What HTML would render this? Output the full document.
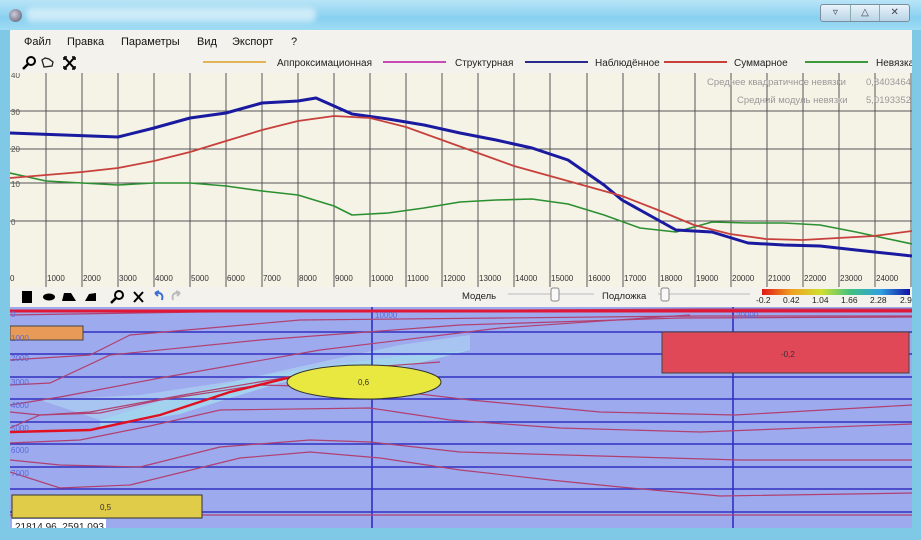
<!DOCTYPE html>
<html><head><meta charset="utf-8"><style>
*{margin:0;padding:0;box-sizing:border-box}
body{width:921px;height:540px;overflow:hidden;background:#7fc8e6;font-family:"Liberation Sans",sans-serif;position:relative}
.title{position:absolute;left:0;top:0;width:921px;height:30px;background:linear-gradient(180deg,#b8e4f6,#88d0f0 60%,#a0dcf4)}
.blur{position:absolute;left:26px;top:8px;width:290px;height:14px;background:rgba(255,255,255,.55);border-radius:6px;filter:blur(3px)}
.btns{position:absolute;left:820px;top:4px;width:90px;height:18px;border:1px solid #7a8ea0;border-radius:3px;background:linear-gradient(#e8f3fa,#b9d4e6);font-size:10px;color:#445;display:flex}
.btns span{flex:1;text-align:center;border-right:1px solid #8aa;line-height:16px}
.menu{position:absolute;left:10px;top:30px;width:902px;height:23px;background:#f3f2ec;font-size:11px;color:#111}
.menu span{position:absolute;top:6px}
.tb{position:absolute;left:10px;top:53px;width:902px;height:20px;background:#f3f2ec;font-size:10px;color:#222}
.chart{position:absolute;left:10px;top:73px;width:902px;height:214px;background:#f5f2e6}
.tb2{position:absolute;left:10px;top:287px;width:902px;height:20px;background:#f3f2ec;font-size:10px;color:#222}
</style></head><body>
<div class="title"><div style="position:absolute;left:9px;top:9px;width:13px;height:13px;border-radius:50%;background:radial-gradient(circle at 40% 40%,#ccd,#556)"></div><div class="blur"></div>
<div class="btns"><span>▿</span><span>△</span><span style="border:none">✕</span></div></div>
<div class="menu"><span style="left:14px">Файл</span><span style="left:57px">Правка</span><span style="left:111px">Параметры</span><span style="left:187px">Вид</span><span style="left:222px">Экспорт</span><span style="left:281px">?</span></div>
<div class="tb">
<svg width="902" height="20" style="position:absolute;left:0;top:0">
<circle cx="21" cy="8" r="4" fill="none" stroke="#000" stroke-width="2"/><line x1="18" y1="11" x2="13" y2="16" stroke="#000" stroke-width="2.5"/>
<path d="M34 14 L32 7 L35 5 L39 6 L43 9 L42 13 Z" fill="none" stroke="#222" stroke-width="1.3"/>
<path d="M55 5 L64 15 M64 5 L55 15" stroke="#000" stroke-width="2"/><path d="M54 4h3M54 4v3M65 4h-3M65 4v3M54 16h3M54 16v-3M65 16h-3M65 16v-3" stroke="#000" stroke-width="1.5"/>
<line x1="193" y1="9" x2="256" y2="9" stroke="#e3b457" stroke-width="2"/>
<text x="267" y="13" font-size="10" fill="#222" font-family="Liberation Sans">Аппроксимационная</text>
<line x1="373" y1="9" x2="436" y2="9" stroke="#c84ab5" stroke-width="2"/>
<text x="445" y="13" font-size="10" fill="#222" font-family="Liberation Sans">Структурная</text>
<line x1="515" y1="9" x2="578" y2="9" stroke="#2a2a8c" stroke-width="2"/>
<text x="585" y="13" font-size="10" fill="#222" font-family="Liberation Sans">Наблюдённое</text>
<line x1="654" y1="9" x2="717" y2="9" stroke="#c8403c" stroke-width="2"/>
<text x="724" y="13" font-size="10" fill="#222" font-family="Liberation Sans">Суммарное</text>
<line x1="795" y1="9" x2="858" y2="9" stroke="#3a9a3c" stroke-width="2"/>
<text x="866" y="13" font-size="10" fill="#222" font-family="Liberation Sans">Невязка</text>
</svg></div>
<div class="chart">
<svg width="902" height="214" style="position:absolute;left:0;top:0" font-family="Liberation Sans" font-size="8" fill="#555">
<g stroke="#555" stroke-width="1">
<line x1="36" y1="0" x2="36" y2="214"/><line x1="72" y1="0" x2="72" y2="214"/><line x1="108" y1="0" x2="108" y2="214"/><line x1="144" y1="0" x2="144" y2="214"/><line x1="180" y1="0" x2="180" y2="214"/><line x1="216" y1="0" x2="216" y2="214"/><line x1="252" y1="0" x2="252" y2="214"/><line x1="288" y1="0" x2="288" y2="214"/><line x1="324" y1="0" x2="324" y2="214"/><line x1="360" y1="0" x2="360" y2="214"/><line x1="396" y1="0" x2="396" y2="214"/><line x1="432" y1="0" x2="432" y2="214"/><line x1="468" y1="0" x2="468" y2="214"/><line x1="504" y1="0" x2="504" y2="214"/><line x1="540" y1="0" x2="540" y2="214"/><line x1="577" y1="0" x2="577" y2="214"/><line x1="613" y1="0" x2="613" y2="214"/><line x1="649" y1="0" x2="649" y2="214"/><line x1="685" y1="0" x2="685" y2="214"/><line x1="721" y1="0" x2="721" y2="214"/><line x1="757" y1="0" x2="757" y2="214"/><line x1="793" y1="0" x2="793" y2="214"/><line x1="829" y1="0" x2="829" y2="214"/><line x1="865" y1="0" x2="865" y2="214"/><line x1="901" y1="0" x2="901" y2="214"/>
<line x1="0" y1="38" x2="902" y2="38"/><line x1="0" y1="76" x2="902" y2="76"/><line x1="0" y1="110" x2="902" y2="110"/><line x1="0" y1="148" x2="902" y2="148"/>
</g>
<text x="1" y="5">40</text><text x="1" y="42">30</text><text x="1" y="79">20</text><text x="1" y="114">10</text><text x="1" y="152">0</text>
<g fill="#333"><text x="0" y="208">0</text><text x="37" y="208">1000</text><text x="73" y="208">2000</text><text x="109" y="208">3000</text><text x="145" y="208">4000</text><text x="181" y="208">5000</text><text x="217" y="208">6000</text><text x="253" y="208">7000</text><text x="289" y="208">8000</text><text x="325" y="208">9000</text><text x="361" y="208">10000</text><text x="397" y="208">11000</text><text x="433" y="208">12000</text><text x="469" y="208">13000</text><text x="505" y="208">14000</text><text x="541" y="208">15000</text><text x="578" y="208">16000</text><text x="614" y="208">17000</text><text x="650" y="208">18000</text><text x="686" y="208">19000</text><text x="722" y="208">20000</text><text x="758" y="208">21000</text><text x="794" y="208">22000</text><text x="830" y="208">23000</text><text x="866" y="208">24000</text></g>
<g transform="translate(-10,-73)" fill="none" stroke-width="2.2" stroke-linejoin="round">
<polyline stroke="#2a9030" stroke-width="1.6" points="10,173 46,181 82,183 118,185 154,183 190,183 226,186 262,191 298,195 334,206 352,215 388,213 424,208 460,202 496,200 532,199 568,204 604,215 640,228 676,232 712,222 748,223 784,223 820,225 856,232 912,244"/>
<polyline stroke="#1a1aa0" stroke-width="3" points="10,133 118,137 154,128 190,118 226,113 262,103 298,101 316,98 352,114 388,119 424,125 460,133 496,140 532,148 568,160 604,185 622,200 640,210 676,230 712,232 748,243 784,245 820,246 856,250 912,256"/>
<polyline stroke="#c8403c" stroke-width="1.8" points="10,178 82,172 118,168 154,161 190,152 226,141 262,130 298,121 334,116 370,118 406,127 442,140 478,153 514,166 550,176 586,186 622,196 658,210 694,225 730,234 766,239 802,240 838,238 874,236 912,231"/>
</g>
<text x="697" y="12" fill="#999" font-size="9.5">Среднее квадратичное невязки</text><text x="856" y="12" fill="#999" font-size="9.5">0,8403464</text>
<text x="727" y="30" fill="#999" font-size="9.5">Средний модуль невязки</text><text x="856" y="30" fill="#999" font-size="9.5">5,0193352</text>
</svg></div>
<div class="tb2">
<svg width="902" height="20" style="position:absolute;left:0;top:0" font-family="Liberation Sans" font-size="9.5">
<rect x="12" y="4" width="10" height="12" fill="#000"/>
<ellipse cx="39" cy="10" rx="6" ry="3.5" fill="#000"/>
<path d="M52 14 L54 6 L61 6 L66 14Z" fill="#000"/>
<path d="M75 14 L79 7 L86 6 L86 14Z" fill="#000"/>
<circle cx="109" cy="8" r="4" fill="none" stroke="#000" stroke-width="2"/><line x1="106" y1="11" x2="101" y2="16" stroke="#000" stroke-width="2.5"/>
<path d="M124 5 L133 15 M133 5 L124 15" stroke="#000" stroke-width="2"/>
<path d="M145 6 L149 4 M145 6 L148 9 M146 6 Q154 5 152 13" fill="none" stroke="#3d6fd0" stroke-width="2"/>
<path d="M170 6 L166 4 M170 6 L167 9 M169 6 Q161 5 163 13" fill="none" stroke="#bbb" stroke-width="2"/>
<text x="452" y="12" fill="#222">Модель</text>
<line x1="498" y1="7" x2="584" y2="7" stroke="#bbb"/><rect x="541" y="1" width="8" height="13" rx="2" fill="#f8f8f8" stroke="#888"/>
<text x="592" y="12" fill="#222">Подложка</text>
<line x1="648" y1="7" x2="740" y2="7" stroke="#bbb"/><rect x="651" y="1" width="8" height="13" rx="2" fill="#f8f8f8" stroke="#888"/>
<defs><linearGradient id="cb"><stop offset="0" stop-color="#e01818"/><stop offset=".2" stop-color="#f0a020"/><stop offset=".4" stop-color="#d0e030"/><stop offset=".6" stop-color="#40c080"/><stop offset=".8" stop-color="#30a0e0"/><stop offset="1" stop-color="#1010a0"/></linearGradient></defs>
<rect x="752" y="2" width="148" height="6" fill="url(#cb)"/>
<text x="746" y="16" fill="#222" font-size="8.5">-0.2</text><text x="773" y="16" fill="#222" font-size="8.5">0.42</text><text x="802" y="16" fill="#222" font-size="8.5">1.04</text><text x="831" y="16" fill="#222" font-size="8.5">1.66</text><text x="860" y="16" fill="#222" font-size="8.5">2.28</text><text x="890" y="16" fill="#222" font-size="8.5">2.9</text>
</svg></div>
<svg width="902" height="221" style="position:absolute;left:10px;top:307px" font-family="Liberation Sans" font-size="8">
<g transform="translate(-10,-307)">
<rect x="10" y="307" width="902" height="221" fill="#9eaaee"/>
<path d="M40 400 L140 395 L240 380 L330 360 L400 345 L470 335 L470 350 L400 356 L320 366 L250 378 L180 395 L100 420Z" fill="#a8c4f0"/>
<path d="M100 420 L180 395 L250 378 L320 366 L400 356 L470 350 L400 368 L330 375 L280 383 L230 398 L180 414 L130 422 L100 428Z" fill="#a2d2ee"/>
<g stroke="#3030c0" stroke-width="1.6"><line x1="10" y1="332" x2="912" y2="332"/><line x1="10" y1="354" x2="912" y2="354"/><line x1="10" y1="377" x2="912" y2="377"/><line x1="10" y1="399" x2="912" y2="399"/><line x1="10" y1="422" x2="912" y2="422"/><line x1="10" y1="444" x2="912" y2="444"/><line x1="10" y1="467" x2="912" y2="467"/><line x1="10" y1="489" x2="912" y2="489"/><line x1="10" y1="512" x2="912" y2="512"/>
<line x1="372" y1="307" x2="372" y2="528"/><line x1="733" y1="307" x2="733" y2="528"/></g>
<g fill="none" stroke="#b04070" stroke-width="1.2">
<path d="M10 315 L200 312 L700 309 L912 309"/>
<path d="M10 360 L90 355 L130 335 L300 320 L500 318 L700 316 L912 316"/>
<path d="M10 385 L50 383 L110 355 L260 340 L460 325 L680 318 L912 317"/>
<path d="M10 405 L60 397 L160 378 L320 350 L500 328 L690 315"/>
<path d="M10 412 L40 415 L90 412 L200 392 L330 370 L440 362"/>
<path d="M10 428 L40 415 L100 413 L160 400 L260 385 L370 388 L470 400 L600 412 L735 415 L912 405"/>
<path d="M10 443 L80 440 L150 426 L220 410 L370 408 L450 420 L560 428 L700 432 L912 424"/>
<path d="M10 460 L60 465 L140 467 L220 447 L310 440 L370 442 L460 452 L600 456 L740 460 L912 460"/>
<path d="M10 472 L60 488 L130 485 L240 458 L310 452 L380 458 L460 470 L550 480 L620 487 L720 496 L912 493"/>
<path d="M10 515 L912 515"/>
</g>
<path d="M10 432 L90 430 L160 415 L230 392 L300 375 L340 368" fill="none" stroke="#e01020" stroke-width="2.4"/>
<path d="M10 311 L912 311" stroke="#e01838" stroke-width="3"/>
<rect x="10" y="326" width="73" height="14" fill="#e89a58" stroke="#444"/>
<rect x="662" y="332" width="247" height="41" fill="#e04858" stroke="#444"/>
<text x="781" y="357" fill="#333">-0,2</text>
<ellipse cx="364" cy="382" rx="77" ry="17" fill="#e8e840" stroke="#333"/>
<text x="358" y="385" fill="#333">0,6</text>
<rect x="12" y="495" width="190" height="23" fill="#e0cc48" stroke="#333"/>
<text x="100" y="510" fill="#333">0,5</text>
<g fill="#5a6ad8"><text x="11" y="317">0</text><text x="11" y="341">1000</text><text x="11" y="361">2000</text><text x="11" y="385">3000</text><text x="11" y="408">4000</text><text x="11" y="431">5000</text><text x="11" y="453">6000</text><text x="11" y="476">7000</text><text x="375" y="318">10000</text><text x="736" y="318">20000</text></g>
<rect x="12" y="519" width="94" height="14" fill="#fff"/>
<text x="15" y="530" fill="#222" font-size="10">21814,96 ,2591,093</text>
</g></svg>
</body></html>
